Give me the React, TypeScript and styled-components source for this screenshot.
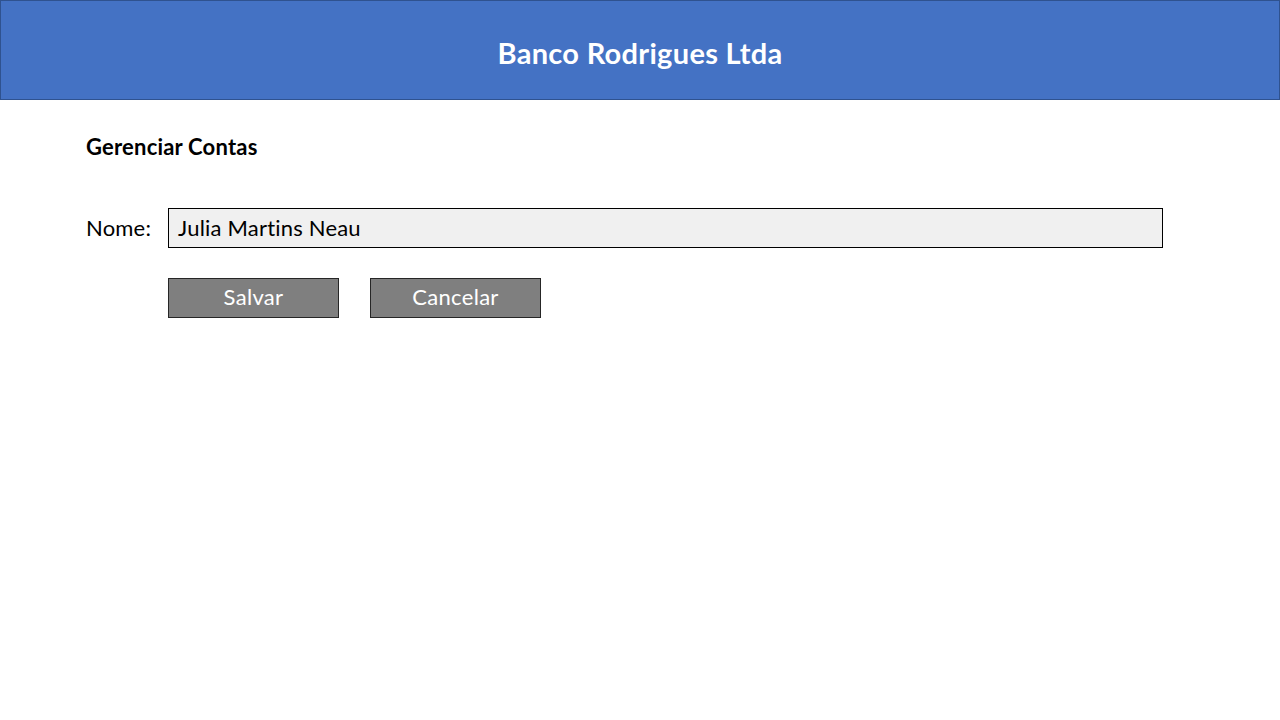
import styled, { createGlobalStyle } from 'styled-components';

const GlobalStyle = createGlobalStyle`
  body {
    margin: 0;
    background: #ffffff;
    font-family: Lato, "Open Sans", sans-serif;
  }
`;

const Header = styled.header`
  height: 100px;
  box-sizing: border-box;
  background: #4472c4;
  border: 1px solid #2f528f;
  display: flex;
  align-items: center;
  justify-content: center;
  h1 {
    margin: 0;
    color: #ffffff;
    font-size: 29px;
    font-weight: 700;
    letter-spacing: 0.3px;
    padding-top: 5px;
  }
`;

const Main = styled.main`
  padding: 32px 86px 0;
`;

const Title = styled.h2`
  margin: 0 0 46px;
  font-size: 22px;
  font-weight: 700;
  letter-spacing: 0.2px;
  color: #000;
  line-height: 30px;
`;

const Row = styled.div`
  display: flex;
  align-items: center;
  gap: 16px;
`;

const Label = styled.label`
  width: 66px;
  font-size: 22px;
  letter-spacing: 0.2px;
  color: #000;
  padding-bottom: 2px;
`;

const Field = styled.div`
  width: 995px;
  height: 40px;
  box-sizing: border-box;
  border: 1px solid #000;
  background: #f0f0f0;
  display: flex;
  align-items: center;
  padding: 0 0 2px 9px;
  font-size: 22px;
  letter-spacing: 0.2px;
  color: #000;
`;

const Actions = styled.div`
  display: flex;
  gap: 31px;
  margin: 30px 0 0 82px;
`;

const Button = styled.button`
  width: 171px;
  height: 40px;
  box-sizing: border-box;
  border: 1px solid #262626;
  background: #7f7f7f;
  color: #ffffff;
  font-family: inherit;
  font-size: 22px;
  letter-spacing: 0.3px;
  padding: 0 0 3px;
  cursor: pointer;
`;

export default function App() {
  return (
    <>
      <GlobalStyle />
      <Header>
        <h1>Banco Rodrigues Ltda</h1>
      </Header>
      <Main>
        <Title>Gerenciar Contas</Title>
        <Row>
          <Label>Nome:</Label>
          <Field>Julia Martins Neau</Field>
        </Row>
        <Actions>
          <Button>Salvar</Button>
          <Button>Cancelar</Button>
        </Actions>
      </Main>
    </>
  );
}
